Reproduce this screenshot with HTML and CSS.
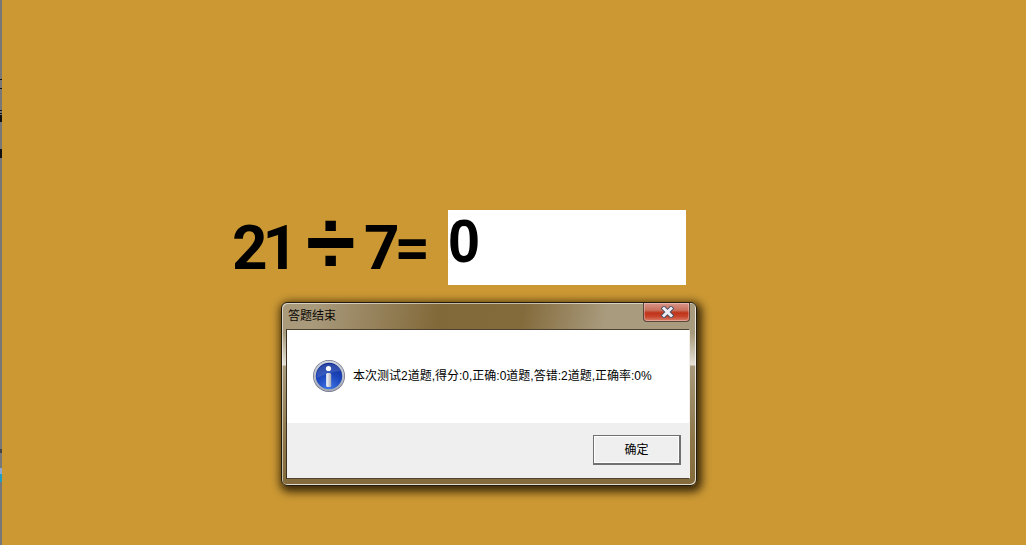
FILE: index.html
```html
<!DOCTYPE html>
<html lang="zh">
<head>
<meta charset="utf-8">
<title>答题结束</title>
<link rel="stylesheet" href="styles.css">
</head>
<body>
<div class="edge"></div>
<main class="quiz">
  <div class="equation"><span class="digits tight">21</span><span class="divide">÷</span><span class="digits snug">7=</span></div>
  <div class="answer"><span class="zero">0</span></div>
</main>
<section class="dialog">
  <header class="titlebar">
    <span class="title">答题结束</span>
    <button class="close" aria-label="关闭">
      <svg width="15" height="12" viewBox="0 0 15 12"><path d="M4 2.500l7 7M11 2.500l-7 7" fill="none" stroke="#4b4f63" stroke-width="4.800" stroke-linecap="square"/><path d="M4 2.500l7 7M11 2.500l-7 7" fill="none" stroke="#eeeef4" stroke-width="3" stroke-linecap="square"/></svg>
    </button>
  </header>
  <div class="panel">
    <div class="message">
      <svg class="info" width="34" height="34" viewBox="0 0 34 34">
        <defs>
          <linearGradient id="ring" x1="0" y1="0" x2="0" y2="1"><stop offset="0" stop-color="#d4d6de"/><stop offset="1" stop-color="#a4a8b6"/></linearGradient>
          <radialGradient id="ball" cx=".5" cy="1" r="1"><stop offset="0" stop-color="#3f78e6"/><stop offset=".55" stop-color="#1c46bc"/><stop offset="1" stop-color="#122e94"/></radialGradient>
          <linearGradient id="stem" x1="0" y1="0" x2="1" y2="0"><stop offset="0" stop-color="#fff"/><stop offset="1" stop-color="#a8acba"/></linearGradient>
        </defs>
        <circle cx="17" cy="17" r="16" fill="#6f7386"/>
        <circle cx="17" cy="17" r="15.300" fill="url(#ring)"/>
        <circle cx="17" cy="17" r="13.200" fill="url(#ball)"/>
        <path d="M5 14A12.500 11 0 0 1 29 12Q17 13 5 19z" fill="#fff" opacity=".12"/>
        <circle cx="16.500" cy="9.500" r="2.600" fill="#fff"/>
        <rect x="14.200" y="14" width="5" height="14" rx="1.500" fill="url(#stem)"/>
      </svg>
      <p class="text">本次测试2道题,得分:0,正确:0道题,答错:2道题,正确率:0%</p>
    </div>
    <div class="actions"><button class="ok">确定</button></div>
  </div>
</section>
</body>
</html>
```

FILE: styles.css
```css
html, body {
  margin: 0;
  height: 100%;
}
body {
  position: relative;
  overflow: hidden;
  background: #cb9833;
  font-family: "Liberation Sans", "Noto Sans CJK SC", sans-serif;
}
.edge {
  position: absolute;
  left: 0;
  top: 0;
  bottom: 0;
  width: 2px;
  background: linear-gradient(180deg, #777 0 79px, #111 79px 80px, #777 80px 88px, #111 88px 89px, #777 89px 110px, #111 110px 111px, #777 111px 113px, #111 113px 114px, #777 114px 115px, #111 115px 122px, #777 122px 149px, #111 149px 158px, #777 158px 449px, #444 449px 453px, #777 453px 468px, #8aa8d0 468px 474px, #1e9ec4 474px 482px, #777 482px);
}
.quiz {
  display: flex;
  align-items: flex-start;
  padding: 210px 0 0 232px;
}
.equation {
  display: flex;
  align-items: center;
  width: 216px;
  height: 75px;
  font-size: 62px;
  font-weight: 700;
  color: #000;
  line-height: 75px;
}
.digits {
  display: inline-block;
  font-family: Roboto, "Liberation Sans", sans-serif;
}
.tight {
  letter-spacing: -5px;
  width: 62px;
}
.snug {
  letter-spacing: -5px;
}
.divide {
  font-size: 90px;
  width: 46px;
  margin: -8px 12px 0 12px;
  text-align: center;
}
.answer {
  width: 238px;
  height: 75px;
  background: #fff;
  font-size: 62px;
  font-weight: 700;
  line-height: 62px;
  color: #000;
}
.zero {
  display: inline-block;
  transform: scaleX(.93);
  transform-origin: left center;
}
.dialog {
  position: absolute;
  left: 281px;
  top: 302px;
  width: 416px;
  height: 184px;
  box-sizing: border-box;
  display: flex;
  flex-direction: column;
  padding: 0 6px 6px 4px;
  border: 1px solid #241c0e;
  border-radius: 6px;
  background:
    linear-gradient(100deg, #a99a7c 8%, #826939 38%, #846b3c 58%, #a99b7e 78%) top / 100% 27px no-repeat,
    linear-gradient(180deg, #a89a7c 0, #a89a7c 30px, #e6e2d8 62px, #a89a7c 63px, #8d7647 140px, #836b3c 100%);
  box-shadow: inset 1px 1px 0 rgba(255,255,255,.55), inset -1px -1px 0 rgba(255,255,255,.75), 2px 3px 9px 3px rgba(25,15,0,.8);
}
.titlebar {
  display: flex;
  justify-content: space-between;
  height: 26px;
  flex: none;
}
.title {
  font-size: 12px;
  line-height: 25px;
  padding: 1px 0 0 2px;
  color: #0c0804;
}
.close {
  width: 47px;
  height: 19px;
  margin: 0;
  padding: 0 0 0 1px;
  display: flex;
  align-items: center;
  justify-content: center;
  border: 1px solid #5a463c;
  border-top: 0;
  border-radius: 0 0 4px 4px;
  background: linear-gradient(180deg, #d9968a 0, #c8705c 40%, #bf3218 55%, #c8452c 75%, #d98068 100%);
  box-shadow: inset 0 0 0 1px rgba(255,255,255,.3);
}
.panel {
  flex: 1;
  display: flex;
  flex-direction: column;
  border: 1px solid;
  border-color: #4d4330 #f2efe8 #4d4330 #3a3020;
  background: #fff;
}
.message {
  flex: none;
  height: 93px;
  display: flex;
  align-items: center;
  gap: 7px;
  padding: 0 0 1px 25px;
  box-sizing: border-box;
}
.text {
  margin: 0 0 3px;
  font-size: 12px;
  color: #000;
}
.actions {
  flex: 1;
  background: #efefef;
  display: flex;
  justify-content: flex-end;
  align-items: flex-start;
  padding: 12px 8px 0 0;
}
.ok {
  width: 88px;
  height: 30px;
  padding: 0 0 2px;
  border: 1px solid #707070;
  border-right-width: 2px;
  border-bottom-width: 2px;
  background: #efefef;
  box-shadow: inset 1px 1px 0 #fff, inset -1px -1px 0 #fff;
  font: 12px "Liberation Sans", "Noto Sans CJK SC", sans-serif;
  color: #000;
}
```
